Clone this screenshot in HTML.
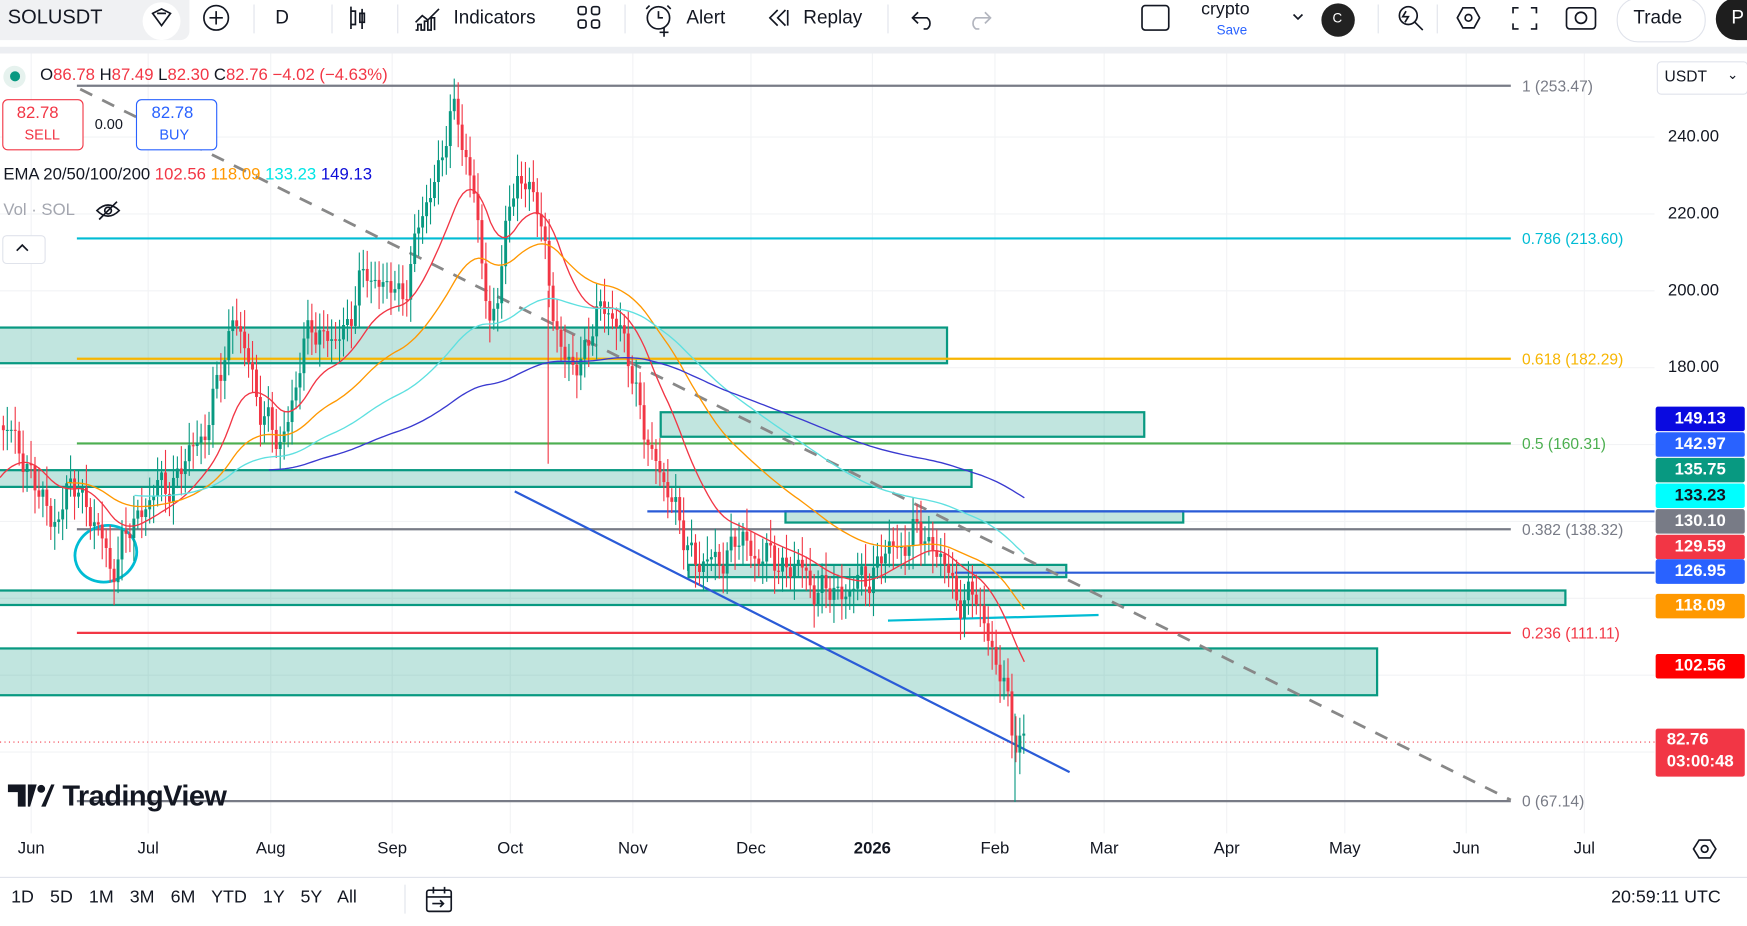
<!DOCTYPE html>
<html><head><meta charset="utf-8"><style>
html,body{margin:0;padding:0;width:1747px;height:926px;overflow:hidden;background:#fff;font-family:"Liberation Sans",sans-serif}
#w{position:absolute;left:0;top:0;width:1568px;height:831px;transform:scale(1.11416);transform-origin:0 0;background:#fff}
.t{position:absolute;white-space:nowrap}
</style></head><body><div id="w">
<!-- top bar -->
<div style="position:absolute;left:0;top:0;width:1568px;height:42px;background:#fff"></div>
<div style="position:absolute;left:0;top:42px;width:1568px;height:6px;background:#eceef2"></div>
<div style="position:absolute;left:0;top:0;width:170px;height:36px;background:#f0f1f3;border-radius:0 0 8px 0"></div>
<div class="t" style="left:7px;top:5px;font-size:18px;color:#131722">SOLUSDT</div>
<div style="position:absolute;left:128px;top:2px;width:34px;height:34px;border-radius:17px;background:#fff"></div>
<svg style="position:absolute;left:0;top:0" width="1568" height="42" fill="none" stroke="#131722" stroke-width="1.5">
<path d="M137 12l8-4 8 4-8 11z M141 12h8"/>
<circle cx="194" cy="16" r="11"/><path d="M194 10v12M188 16h12"/>
<path d="M228 4v26M298 4v26M357 4v26M561 4v26M797 4v26M1237 4v26M1290 4v26" stroke="#e0e3eb" stroke-width="1"/>
<path d="M315 6v20M315 10h4v12h-4z M325 8v18M323 12h4v8h-4z"/>
<path d="M373 20l6-6 5 4 10-10M373 27h2v-5h3v5h3v-8h3v8h3v-11h3v11"/>
<rect x="519" y="6" width="7" height="7" rx="2"/><rect x="531" y="6" width="7" height="7" rx="2"/><rect x="519" y="18" width="7" height="7" rx="2"/><rect x="531" y="18" width="7" height="7" rx="2"/>
<circle cx="591" cy="16" r="10"/><path d="M591 10v6h4M596 25v8M592 29h8M583 5l-3 3M599 5l3 3"/>
<path d="M698 9l-7 7 7 7M705 9l-7 7 7 7M707 9v14"/>
<path d="M820 16h12a6 6 0 010 10h-3M824 11l-5 5 5 5"/>
<path d="M888 16h-12a6 6 0 000 10h3M884 11l5 5-5 5" stroke="#b2b5be"/>
<rect x="1025" y="5" width="24" height="22" rx="3"/>
<path d="M1161 13l4 4 4-4"/>
<circle cx="1264" cy="14" r="8"/><path d="M1270 20l7 7M1262 10l-3 5h5l-3 5"/>
<path d="M1308 16l5-9h10l5 9-5 9h-10z"/><circle cx="1318" cy="16" r="3"/>
<path d="M1358 12v-5h5M1374 7h5v5M1379 21v5h-5M1363 26h-5v-5"/>
<rect x="1406" y="7" width="26" height="19" rx="3"/><circle cx="1419" cy="16" r="5"/>
</svg>
<div class="t" style="left:247px;top:6px;font-size:17px;color:#131722">D</div>
<div class="t" style="left:407px;top:6px;font-size:17px;color:#131722">Indicators</div>
<div class="t" style="left:616px;top:6px;font-size:17px;color:#131722">Alert</div>
<div class="t" style="left:721px;top:6px;font-size:17px;color:#131722">Replay</div>
<div class="t" style="left:1078px;top:0px;font-size:16px;color:#131722">crypto</div>
<div class="t" style="left:1092px;top:20px;font-size:12px;color:#2962ff">Save</div>
<div style="position:absolute;left:1186px;top:3px;width:30px;height:30px;border-radius:15px;background:#222"></div>
<div class="t" style="left:1196px;top:9px;font-size:12px;color:#fff">C</div>
<div style="position:absolute;left:1451px;top:-2px;width:78px;height:38px;border:1px solid #e0e3eb;border-radius:19px"></div>
<div class="t" style="left:1466px;top:6px;font-size:17px;color:#131722">Trade</div>
<div style="position:absolute;left:1540px;top:-2px;width:50px;height:38px;border-radius:19px;background:#1e1e1e"></div>
<div class="t" style="left:1554px;top:6px;font-size:17px;color:#fff">P</div>

<!-- chart -->
<svg id="ch" style="position:absolute;left:0;top:48px" width="1568" height="740"></svg>

<!-- legend -->
<div style="position:absolute;left:3px;top:59px;width:20px;height:20px;border-radius:10px;background:#e6f2ee"></div>
<div style="position:absolute;left:9px;top:64px;width:9px;height:9px;border-radius:5px;background:#089981"></div>
<div class="t" style="left:36px;top:59px;font-size:15px;color:#f23645"><span style="color:#131722">O</span>86.78 <span style="color:#131722">H</span>87.49 <span style="color:#131722">L</span>82.30 <span style="color:#131722">C</span>82.76 −4.02 (−4.63%)</div>
<div style="position:absolute;left:2px;top:89px;width:71px;height:44px;border:1px solid #f23645;border-radius:5px;background:#fff"></div>
<div class="t" style="left:15px;top:93px;font-size:15px;color:#f23645">82.78</div>
<div class="t" style="left:22px;top:113px;font-size:13px;color:#f23645">SELL</div>
<div class="t" style="left:85px;top:104px;font-size:13px;color:#131722">0.00</div>
<div style="position:absolute;left:122px;top:89px;width:71px;height:44px;border:1px solid #2962ff;border-radius:5px;background:#fff"></div>
<div class="t" style="left:136px;top:93px;font-size:15px;color:#2962ff">82.78</div>
<div class="t" style="left:143px;top:113px;font-size:13px;color:#2962ff">BUY</div>
<div class="t" style="left:3px;top:148px;font-size:15px;color:#131722">EMA 20/50/100/200 <span style="color:#f23645">102.56</span> <span style="color:#ff9800">118.09</span> <span style="color:#00e5e5">133.23</span> <span style="color:#0d0dd8">149.13</span></div>
<div class="t" style="left:3px;top:180px;font-size:15px;color:#a3a6af">Vol · SOL</div>
<svg style="position:absolute;left:85px;top:179px" width="24" height="20" fill="none" stroke="#131722" stroke-width="1.5"><path d="M2 10q10-10 20 0q-10 10-20 0z"/><circle cx="12" cy="10" r="3"/><path d="M4 18L20 2"/></svg>
<div style="position:absolute;left:2px;top:211px;width:37px;height:24px;border:1px solid #e0e3eb;border-radius:4px;background:#fff"></div>
<svg style="position:absolute;left:12px;top:216px" width="16" height="14" fill="none" stroke="#131722" stroke-width="1.5"><path d="M3 9l5-5 5 5"/></svg>
<!-- logo -->
<svg style="position:absolute;left:7px;top:704px" width="42" height="22"><path d="M0 0h16v20h-7V7H0z M18 0h8l-6 20h-2z" fill="#131722"/><circle cx="30" cy="4" r="3.5" fill="#131722"/><path d="M30 20l9-20h3l-8 20z" fill="#131722"/></svg>
<div class="t" style="left:56px;top:699px;font-size:26px;font-weight:bold;color:#131722;letter-spacing:-0.5px">TradingView</div>

<!-- right axis -->
<div style="position:absolute;left:1487px;top:55px;width:80px;height:28px;border:1px solid #e0e3eb;border-radius:4px;background:#fff"></div>
<div class="t" style="left:1494px;top:60px;font-size:14px;color:#131722">USDT</div>
<div class="t" style="left:1550px;top:60px;font-size:12px;color:#131722">⌄</div>
<div id="ax"></div>

<!-- time axis -->
<div id="tx"></div>
<div style="position:absolute;left:0;top:787px;width:1568px;height:1px;background:#e0e3eb"></div>
<div class="t" style="left:10px;top:797px;font-size:16px;color:#131722;word-spacing:10px">1D 5D 1M 3M 6M YTD 1Y 5Y All</div>
<div style="position:absolute;left:363px;top:794px;width:1px;height:26px;background:#e0e3eb"></div>
<svg style="position:absolute;left:380px;top:795px" width="28" height="26" fill="none" stroke="#131722" stroke-width="1.5"><rect x="3" y="4" width="22" height="19" rx="2"/><path d="M3 10h22M9 1v6M19 1v6M8 16h10M15 13l3 3-3 3"/></svg>
<div class="t" style="left:1446px;top:797px;font-size:16px;color:#131722">20:59:11 UTC</div>
<svg style="position:absolute;left:1518px;top:752px" width="24" height="20" fill="none" stroke="#131722" stroke-width="1.5"><path d="M2 10l5-8h10l5 8-5 8H7z"/><circle cx="12" cy="10" r="3"/></svg>

<script>
var NS="http://www.w3.org/2000/svg",svg=document.getElementById('ch');
function Y(p){return 123+(240-p)*3.45-48}
function el(n,a){var e=document.createElementNS(NS,n);for(var k in a)e.setAttribute(k,a[k]);svg.appendChild(e);return e}
// grid
[28,133,243,352,458,568,674,783,893,991,1101,1207,1316,1422].forEach(function(x){el('line',{x1:x,y1:0,x2:x,y2:700,stroke:'#f2f3f5'})});
[240,220,200,180,160,140,120,100,80].forEach(function(p){el('line',{x1:0,y1:Y(p),x2:1485,y2:Y(p),stroke:'#f2f3f5'})});
// zones
function box(x1,y1,x2,y2){el('rect',{x:x1,y:y1-48,width:x2-x1,height:y2-y1,fill:'rgba(8,153,129,0.25)',stroke:'#089981','stroke-width':2})}
box(-2,294,850,326);box(593,370,1027,392);box(-2,422,872,437);box(705,459,1062,469);box(618,507,957,518);box(-2,530,1405,543);box(-2,582,1236,624);
// fib
function hl(y,c,w,x1,x2){el('line',{x1:x1||69,y1:y-48,x2:x2||1356,y2:y-48,stroke:c,'stroke-width':w||2})}
hl(77,'#787b86');hl(214,'#00bcd4');hl(322,'#f7b500');hl(398,'#4caf50');hl(475,'#787b86');hl(568,'#f23645');hl(719,'#787b86');
hl(459,'#2a5bd7',2,581,1485);hl(514,'#2a5bd7',2,857,1485);
el('line',{x1:0,y1:666-48,x2:1485,y2:666-48,stroke:'#f23645','stroke-dasharray':'1 3'});
function tx(x,y,s,c){var t=el('text',{x:x,y:y-48+5,fill:c,'font-size':14,'font-family':'Liberation Sans'});t.textContent=s}
tx(1366,77,'1 (253.47)','#787b86');tx(1366,214,'0.786 (213.60)','#00bcd4');tx(1366,322,'0.618 (182.29)','#f7b500');tx(1366,398,'0.5 (160.31)','#4caf50');tx(1366,475,'0.382 (138.32)','#787b86');tx(1366,568,'0.236 (111.11)','#f23645');tx(1366,719,'0 (67.14)','#787b86');
// trend lines
el('line',{x1:72,y1:80-48,x2:1356,y2:718-48,stroke:'#888','stroke-width':2.5,'stroke-dasharray':'12 10'});
el('line',{x1:462,y1:441-48,x2:960,y2:693-48,stroke:'#2a5bd7','stroke-width':2});
el('line',{x1:797,y1:557-48,x2:986,y2:552-48,stroke:'#00bcd4','stroke-width':2});
el('ellipse',{cx:95,cy:497-48,rx:28,ry:25,fill:'none',stroke:'#00bcd4','stroke-width':2.5,transform:'rotate(-20 95 449)'});
// price path
var K=[[0,165],[20,158],[45,140],[70,150],[100,128],[130,145],[160,152],[190,168],[210,195],[225,178],[250,158],[280,192],[300,185],[330,205],[360,198],[385,225],[410,248],[425,225],[440,190],[465,232],[482,222],[495,200],[505,180],[520,182],[545,198],[562,184],[575,170],[585,155],[600,150],[615,133],[640,128],[660,135],[690,130],[715,128],[740,121],[770,123],[800,133],[830,137],[845,130],[858,121],[878,119],[890,108],[900,97],[910,85],[922,83]];
function P(x){for(var i=1;i<K.length;i++)if(x<=K[i][0]){var a=K[i-1],b=K[i];return a[1]+(b[1]-a[1])*(x-a[0])/(b[0]-a[0])}return 83}
var s=7,prev=P(0);
for(var x=3;x<=922;x+=3.55){var c=P(x)+Math.sin(x*1.7)*4*Math.cos(x*0.31)+Math.sin(x*0.53)*2;var o=prev;var up=c>=o;var col=up?'#089981':'#f23645';var hi=Math.max(o,c)+2+Math.abs(Math.sin(x*3.1))*4,lo=Math.min(o,c)-2-Math.abs(Math.cos(x*2.3))*4;
el('line',{x1:x,y1:Y(hi),x2:x,y2:Y(lo),stroke:col,'stroke-width':1});el('rect',{x:x-1.3,y:Y(Math.max(o,c)),width:2.6,height:Math.max(1,Math.abs(o-c)*3.45),fill:col});prev=c}
el('line',{x1:492,y1:Y(200),x2:492,y2:Y(155),stroke:'#f23645'});el('line',{x1:911,y1:Y(90),x2:911,y2:Y(67),stroke:'#089981'});
// EMAs
function ema(n,c){var a=2/(n+1),e=150,pts=[];for(var x=0;x<=922;x+=3.55){e=e+a*(P(x)-e);if(x>n*1.2||n<30)pts.push(x.toFixed(1)+','+Y(e).toFixed(1))}el('polyline',{points:pts.join(' '),fill:'none',stroke:c,'stroke-width':1.2})}
ema(20,'#f23645');ema(50,'#ff9800');ema(100,'#5ee0e0');ema(200,'#3a3ad0');
// axis labels
var ax=document.getElementById('ax'),h='';
[[240,123],[220,192],[200,261],[180,330]].forEach(function(v){h+='<div class="t" style="left:1497px;top:'+(v[1]-9)+'px;font-size:15px;color:#131722">'+v[0]+'.00</div>'});
[['149.13',376,'#0a0ae0','#fff'],['142.97',399,'#2962ff','#fff'],['135.75',422,'#089981','#fff'],['133.23',445,'#00ffff','#131722'],['130.10',468,'#787b86','#fff'],['129.59',491,'#f23645','#fff'],['126.95',513,'#2962ff','#fff'],['118.09',544,'#ff9800','#fff'],['102.56',598,'#ff0000','#fff']].forEach(function(v){h+='<div class="t" style="left:1486px;top:'+(v[1]-11)+'px;width:80px;height:22px;background:'+v[2]+';color:'+v[3]+';font-size:15px;font-weight:bold;line-height:22px;text-align:center;border-radius:2px">'+v[0]+'</div>'});
h+='<div class="t" style="left:1486px;top:654px;width:80px;height:43px;background:#f23645;color:#fff;font-size:15px;font-weight:bold;line-height:20px;padding-left:10px;box-sizing:border-box;border-radius:2px">82.76<br>03:00:48</div>';
ax.innerHTML=h;
var t='';[['Jun',28],['Jul',133],['Aug',243],['Sep',352],['Oct',458],['Nov',568],['Dec',674],['2026',783],['Feb',893],['Mar',991],['Apr',1101],['May',1207],['Jun',1316],['Jul',1422]].forEach(function(v){t+='<div class="t" style="left:'+(v[1]-30)+'px;width:60px;text-align:center;top:753px;font-size:15px;color:#131722;'+(v[0]=='2026'?'font-weight:bold':'')+'">'+v[0]+'</div>'});
document.getElementById('tx').innerHTML=t;
</script>
</div></body></html>
